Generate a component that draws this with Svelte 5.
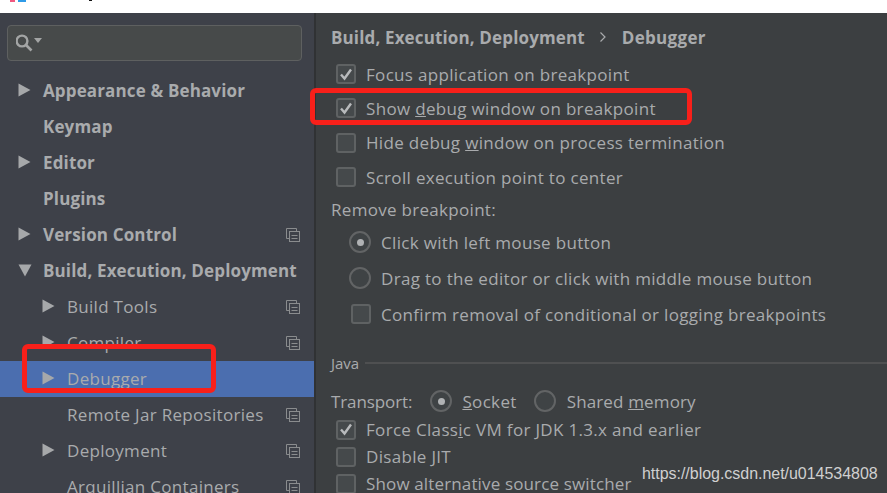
<script>
  const tree = [
    { label: 'Appearance & Behavior', bold: true, arrow: 'right' },
    { label: 'Keymap', bold: true },
    { label: 'Editor', bold: true, arrow: 'right' },
    { label: 'Plugins', bold: true },
    { label: 'Version Control', bold: true, arrow: 'right', copy: true },
    { label: 'Build, Execution, Deployment', bold: true, arrow: 'down' },
    { label: 'Build Tools', sub: true, arrow: 'right', copy: true },
    { label: 'Compiler', sub: true, arrow: 'right', copy: true },
    { label: 'Debugger', sub: true, arrow: 'right', selected: true },
    { label: 'Remote Jar Repositories', sub: true, copy: true },
    { label: 'Deployment', sub: true, arrow: 'right', copy: true },
    { label: 'Arquillian Containers', sub: true, copy: true }
  ];
</script>

<div class="page">
  <div class="topbar">
    <i class="logo a"></i><i class="logo b"></i><i class="logo c"></i>
  </div>
  <div class="main">
    <aside class="side">
      <div class="searchwrap">
        <div class="search">
          <svg width="27" height="18" viewBox="0 0 27 18">
            <circle cx="6" cy="7" r="5.4" fill="none" stroke="#a3a5a5" stroke-width="2.4" />
            <path d="M10 11 L15.5 16.5" stroke="#a3a5a5" stroke-width="2.6" />
            <path d="M18 4 h8 l-4 5 z" fill="#a3a5a5" />
          </svg>
        </div>
      </div>
      <ul class="tree">
        {#each tree as t}
          <li class="row" class:sel={t.selected} class:sub={t.sub}>
            <span class="arrowbox">
              {#if t.arrow === 'right'}
                <svg width="13" height="14" viewBox="0 0 13 14"><path d="M0.5 0.5 L12.5 7 L0.5 13.5 z" fill="#a6a8aa" /></svg>
              {:else if t.arrow === 'down'}
                <svg width="14" height="13" viewBox="0 0 14 13"><path d="M0.5 0.5 H13.5 L7 12.5 z" fill="#a6a8aa" /></svg>
              {/if}
            </span>
            <span class="label" class:bold={t.bold}>{t.label}</span>
            {#if t.copy}
              <svg class="copy" width="14" height="14" viewBox="0 0 14 14" fill="none" stroke="#8a8c8e">
                <path d="M3.5 10.5 H0.5 V0.5 H10.5 V3.5" />
                <rect x="3.5" y="3.5" width="10" height="10" />
                <path d="M5.5 7.5 H11.5 M5.5 10.5 H11.5" />
              </svg>
            {/if}
          </li>
        {/each}
      </ul>
    </aside>
    <div class="divider"></div>
    <section class="content">
      <div class="crumb">
        <span class="bold">Build, Execution, Deployment</span>
        <svg width="8" height="12" viewBox="0 0 8 12" fill="none" stroke="#a9abad" stroke-width="1.2"><path d="M1.5 1.5 L6 6 L1.5 10.5" /></svg>
        <span class="bold last">Debugger</span>
      </div>

      <div class="checks top">
        <label class="opt"><span class="cb on"><svg width="14" height="13" viewBox="0 0 14 13"><path d="M2 6.5 L5.5 10.5 L12 1.5" fill="none" stroke="#b8babc" stroke-width="2.4" /></svg></span>Focus application on breakpoint</label>
        <label class="opt"><span class="cb on"><svg width="14" height="13" viewBox="0 0 14 13"><path d="M2 6.5 L5.5 10.5 L12 1.5" fill="none" stroke="#b8babc" stroke-width="2.4" /></svg></span><span>Show <u>d</u>ebug window on breakpoint</span></label>
        <label class="opt"><span class="cb"></span><span>Hide debug <u>w</u>indow on process termination</span></label>
        <label class="opt"><span class="cb"></span>Scroll execution point to center</label>
      </div>

      <div class="remove">Remove breakpoint:</div>
      <div class="nested">
        <label class="opt"><span class="radio on"></span>Click with left mouse button</label>
        <label class="opt"><span class="radio"></span>Drag to the editor or click with middle mouse button</label>
        <label class="opt conf"><span class="cb"></span>Confirm removal of conditional or logging breakpoints</label>
      </div>

      <div class="java"><span>Java</span><i></i></div>

      <div class="transport">
        <span class="tlabel">Transport:</span>
        <span class="radio on"></span><span class="tval"><u>S</u>ocket</span>
        <span class="radio"></span><span class="shared">Shared <u>m</u>emory</span>
      </div>
      <div class="checks tight">
        <label class="opt"><span class="cb on"><svg width="14" height="13" viewBox="0 0 14 13"><path d="M2 6.5 L5.5 10.5 L12 1.5" fill="none" stroke="#b8babc" stroke-width="2.4" /></svg></span><span>Force Class<u>i</u>c VM for JDK 1.3.x and earlier</span></label>
        <label class="opt"><span class="cb"></span>Disable JIT</label>
        <label class="opt narrow"><span class="cb"></span>Show alternative source switcher</label>
      </div>
    </section>
  </div>

  <div class="mark m1"></div>
  <div class="mark m2"></div>
  <div class="wm">https://blog.csdn.net/u014534808</div>
</div>

<style>
  :global(body) { margin: 0; background: #fff; }
  .page {
    position: relative;
    width: 887px;
    height: 493px;
    overflow: hidden;
    font-family: "Open Sans", "Noto Sans", sans-serif;
    font-size: 17px;
    color: #a9abad;
  }
  .topbar { height: 13px; background: #fff; position: relative; overflow: hidden; }
  .logo { position: absolute; top: 0; height: 2px; }
  .logo.a { left: 10px; width: 5px; background: #f0587f; }
  .logo.b { left: 18px; width: 8px; background: #2f9be8; }
  .logo.c { left: 89px; width: 3px; height: 1px; background: #111; }
  .main { display: flex; height: 480px; }
  .side { width: 314px; background: #3e4149; overflow: hidden; flex: none; }
  .divider { width: 2px; background: #303234; flex: none; }
  .searchwrap { padding: 12px 12px 0 7px; }
  .search {
    height: 34px;
    border: 1px solid #5e6060;
    border-radius: 4px;
    background: #474a4a;
    display: flex;
    align-items: center;
    padding-left: 8px;
  }
  .tree { list-style: none; margin: 12px 0 0; padding: 0; }
  .row {
    height: 36px;
    box-sizing: border-box;
    padding-bottom: 2px;
    display: flex;
    align-items: center;
    position: relative;
    padding-left: 18px;
    white-space: nowrap;
  }
  .row.sub { padding-left: 42px; }
  .row.sel { background: #4b6eaf; }
  .arrowbox { width: 25px; display: flex; align-items: center; flex: none; }
  .label { letter-spacing: 0.3px; }
  .bold { font-weight: 700; letter-spacing: 0.14px; }
  .copy { position: absolute; left: 286px; top: 11px; }

  .content { flex: 1; background: #3c3f41; padding-left: 15px; min-width: 0; white-space: nowrap; }
  .crumb { display: flex; align-items: center; height: 24px; margin-top: 12px; gap: 14px; }
  .crumb .last { margin-left: 1px; letter-spacing: 0.3px; }
  .checks.top { margin-top: 8px; padding-left: 5px; }
  .checks.top .opt { height: 34.33px; }
  .opt { display: flex; align-items: center; gap: 10px; letter-spacing: 0.32px; }
  .cb {
    width: 20px;
    height: 20px;
    box-sizing: border-box;
    border: 2px solid #5f6263;
    border-radius: 3px;
    background: #45494b;
    display: flex;
    align-items: center;
    justify-content: center;
    flex: none;
  }
  .radio {
    width: 22px;
    height: 22px;
    box-sizing: border-box;
    border: 2px solid #626465;
    border-radius: 50%;
    background: #3f4345;
    flex: none;
    display: flex;
    align-items: center;
    justify-content: center;
  }
  .radio.on::after { content: ""; width: 7px; height: 7px; border-radius: 50%; background: #b0b2b4; }
  .remove { margin-top: 4px; height: 24px; line-height: 24px; letter-spacing: 0.3px; }
  .nested { padding-left: 18px; margin-top: 2px; }
  .nested .opt { height: 36px; gap: 10px; }
  .nested .conf { padding-left: 2px; }
  .java { display: flex; align-items: center; gap: 6px; margin-top: 19px; height: 24px; font-size: 15px; }
  .java i { flex: 1; height: 2px; background: #4f5051; margin-top: -1px; }
  .transport { display: flex; align-items: center; margin-top: 12px; height: 28px; letter-spacing: 0.34px; }
  .tlabel { margin-right: 18px; letter-spacing: -0.1px; }
  .transport .radio { margin-right: 10px; }
  .tval { margin-right: 17px; }
  .shared { letter-spacing: 0.14px; margin-left: 1px; }
  .checks.tight { padding-left: 5px; margin-top: 1px; }
  .checks.tight .opt { height: 27px; gap: 10px; }
  .checks.tight .narrow { letter-spacing: 0.14px; }

  .mark { position: absolute; border: 5px solid #f8201a; border-radius: 6px; box-sizing: border-box; }
  .m1 { left: 310px; top: 88px; width: 382px; height: 37px; }
  .m2 { left: 22px; top: 344px; width: 194px; height: 49px; }
  .wm {
    position: absolute;
    left: 642px;
    top: 465px;
    font-family: "Liberation Sans", sans-serif;
    font-size: 16px;
    letter-spacing: -0.03px;
    color: #d0d0d0;
    white-space: nowrap;
  }
</style>
